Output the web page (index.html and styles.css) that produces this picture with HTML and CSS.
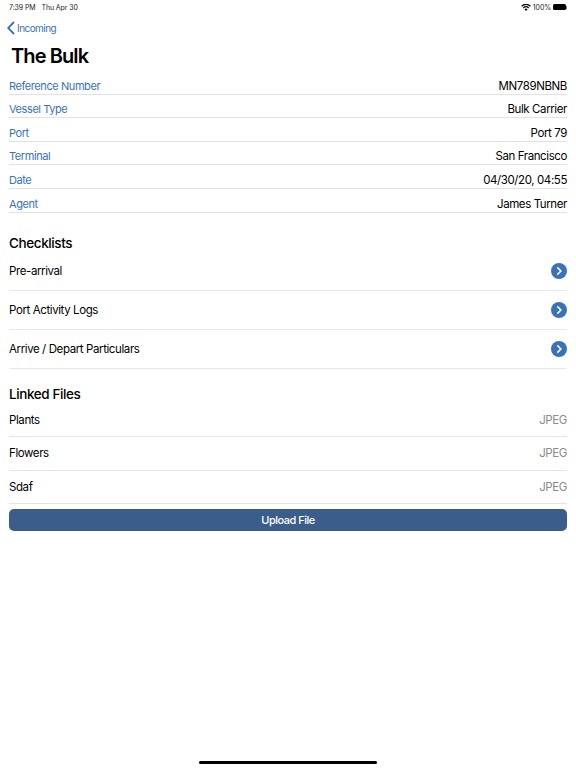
FILE: index.html
```html
<!DOCTYPE html>
<html lang="en">
<head>
    <meta charset="UTF-8">
    <meta name="viewport" content="width=device-width, initial-scale=1.0">
    <title>The Bulk</title>
    <link rel="stylesheet" href="styles.css">
</head>
<body>

<!-- Status bar -->
<div class="status-bar">
    <div class="status-left">
        <span>7:39 PM</span>
        <span>Thu Apr 30</span>
    </div>
    <div class="status-right">
        <svg class="wifi" width="10" height="7" viewBox="0 0 11 8">
            <path d="M5.5 8 3.7 5.9a2.7 2.7 0 0 1 3.6 0z" fill="#000"/>
            <path d="M1.9 3.9a5.3 5.3 0 0 1 7.2 0l-1 1.1a3.9 3.9 0 0 0-5.2 0z" fill="#000"/>
            <path d="M0 1.9a8 8 0 0 1 11 0l-1 1.1a6.6 6.6 0 0 0-9 0z" fill="#000"/>
        </svg>
        <span>100%</span>
        <div class="battery"></div>
        <div class="battery-cap"></div>
    </div>
</div>

<!-- Nav -->
<a class="back-link" href="#">
    <svg width="8" height="14" viewBox="0 0 8 14">
        <path d="M7 1 1.2 7 7 13" fill="none" stroke="#3a72b8" stroke-width="1.8"/>
    </svg>
    <span>Incoming</span>
</a>

<h1 class="page-title">The Bulk</h1>

<!-- Details -->
<div class="details">
    <div class="detail-row"><span class="detail-label">Reference Number</span><span>MN789NBNB</span></div>
    <div class="detail-row"><span class="detail-label">Vessel Type</span><span>Bulk Carrier</span></div>
    <div class="detail-row"><span class="detail-label">Port</span><span>Port 79</span></div>
    <div class="detail-row"><span class="detail-label">Terminal</span><span>San Francisco</span></div>
    <div class="detail-row"><span class="detail-label">Date</span><span>04/30/20, 04:55</span></div>
    <div class="detail-row"><span class="detail-label">Agent</span><span>James Turner</span></div>
</div>

<!-- Checklists -->
<h2 class="section-title checklists-title">Checklists</h2>
<div class="check-row">
    <span>Pre-arrival</span>
    <svg class="go" width="16" height="16" viewBox="0 0 16 16"><circle cx="8" cy="8" r="8" fill="#3a72b8"/><path d="M6.3 4.4 9.9 8l-3.6 3.6" fill="none" stroke="#fff" stroke-width="1.5"/></svg>
</div>
<div class="check-row">
    <span>Port Activity Logs</span>
    <svg class="go" width="16" height="16" viewBox="0 0 16 16"><circle cx="8" cy="8" r="8" fill="#3a72b8"/><path d="M6.3 4.4 9.9 8l-3.6 3.6" fill="none" stroke="#fff" stroke-width="1.5"/></svg>
</div>
<div class="check-row">
    <span>Arrive / Depart Particulars</span>
    <svg class="go" width="16" height="16" viewBox="0 0 16 16"><circle cx="8" cy="8" r="8" fill="#3a72b8"/><path d="M6.3 4.4 9.9 8l-3.6 3.6" fill="none" stroke="#fff" stroke-width="1.5"/></svg>
</div>

<!-- Linked files -->
<h2 class="section-title files-title">Linked Files</h2>
<div class="file-row"><span>Plants</span><span class="file-type">JPEG</span></div>
<div class="file-row"><span>Flowers</span><span class="file-type">JPEG</span></div>
<div class="file-row"><span>Sdaf</span><span class="file-type">JPEG</span></div>

<button class="upload-btn">Upload File</button>

<div class="home-indicator"></div>

</body>
</html>
```

FILE: styles.css
```css
body {
    font-family: Inter, "Liberation Sans", sans-serif;
    background: #fff;
    margin: 0;
    padding: 0 9px;
    height: 768px;
    box-sizing: border-box;
    overflow: hidden;
    color: #000;
    display: flex;
    flex-direction: column;
    font-size: 11.5px;
    letter-spacing: -0.4px;
}
.status-bar {
    height: 14px;
    display: flex;
    justify-content: space-between;
    align-items: center;
    font-size: 7px;
    letter-spacing: -0.1px;
    color: #222;
}
.status-left {
    display: flex;
    gap: 6px;
}
.status-right {
    display: flex;
    align-items: center;
    gap: 2px;
}
.battery {
    width: 13px;
    height: 6px;
    background: #000;
    border-radius: 1.5px;
}
.battery-cap {
    width: 1px;
    height: 3px;
    background: #777;
    margin-left: -2px;
}
.back-link {
    display: flex;
    align-items: center;
    gap: 2px;
    margin: 7px 0 0 -2px;
    height: 14px;
    color: #3a72b8;
    text-decoration: none;
    font-size: 10px;
    letter-spacing: -0.55px;
}
.page-title {
    font-size: 20px;
    font-weight: 600;
    letter-spacing: -0.9px;
    margin: 8px 0 0 2px;
    line-height: 26px;
    height: 26px;
}
.details {
    margin-top: 2px;
}
.detail-row {
    display: flex;
    justify-content: space-between;
    align-items: flex-end;
    height: 23.6px;
    box-sizing: border-box;
    border-bottom: 1px solid #e2e2e2;
    line-height: 16px;
}
.detail-label {
    color: #3a72b8;
    font-size: 11px;
    letter-spacing: -0.42px;
}
.section-title {
    font-size: 13.5px;
    font-weight: 500;
    letter-spacing: -0.4px;
    margin: 0;
    line-height: 18px;
}
.checklists-title {
    margin-top: 21px;
}
.check-row {
    height: 39.3px;
    box-sizing: border-box;
    display: flex;
    justify-content: space-between;
    align-items: center;
    border-bottom: 1px solid #e8e8e8;
}
.files-title {
    margin-top: 16px;
}
.file-row {
    height: 33.6px;
    box-sizing: border-box;
    display: flex;
    justify-content: space-between;
    align-items: center;
    border-bottom: 1px solid #e4e4e4;
}
.file-type {
    color: #8a8a8a;
}
.upload-btn {
    margin-top: 5px;
    height: 22px;
    flex: none;
    background: #3a5d8b;
    border: none;
    border-radius: 5px;
    color: #fff;
    font-family: inherit;
    font-size: 11px;
    font-weight: 500;
    letter-spacing: -0.5px;
}
.home-indicator {
    position: absolute;
    left: 199px;
    top: 761px;
    width: 178px;
    height: 3px;
    background: #000;
    border-radius: 2px;
}
```
